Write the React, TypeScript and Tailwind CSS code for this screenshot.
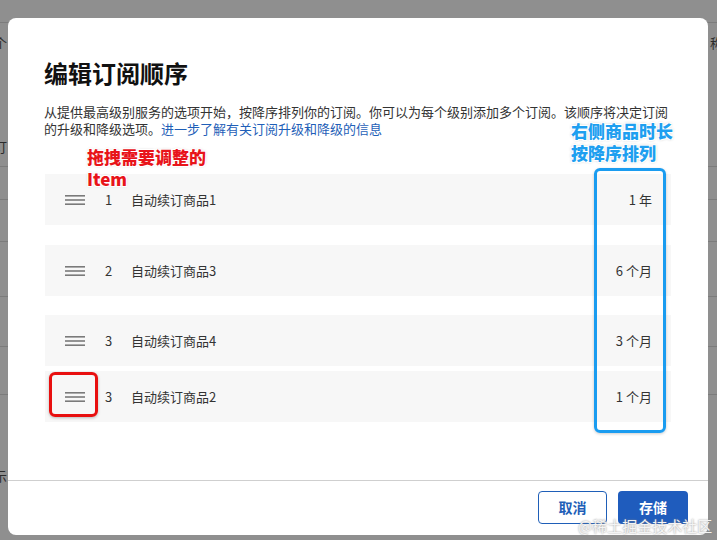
import React from 'react';

const FONT = { fontFamily: '"Noto Sans CJK SC", "Noto Sans", sans-serif' };

const ROWS = [
  { no: 1, name: '自动续订商品1', term: '1 年', mt: 'mt-[37px]' },
  { no: 2, name: '自动续订商品3', term: '6 个月', mt: 'mt-[20px]' },
  { no: 3, name: '自动续订商品4', term: '3 个月', mt: 'mt-[19px]' },
  { no: 3, name: '自动续订商品2', term: '1 个月', mt: 'mt-[5px]' },
];

const DragHandle = () => (
  <svg width="20" height="12" viewBox="0 0 20 12" className="shrink-0">
    <rect x="0" y="1" width="20" height="1.6" fill="#7a7a7a" />
    <rect x="0" y="5.2" width="20" height="1.6" fill="#7a7a7a" />
    <rect x="0" y="9.4" width="20" height="1.6" fill="#7a7a7a" />
  </svg>
);

// page behind the overlay
const Backdrop = () => (
  <div className="flex flex-col text-[13px] text-[#2b2b2b]">
    <div className="h-[23px] border-b border-[#7c7c7c]" />
    <div className="h-[144px] border-b border-[#7c7c7c] flex flex-col justify-between py-[10px]">
      <div className="flex justify-between -ml-[6px] -mr-[6px]">
        <span>个</span>
        <span>称</span>
      </div>
      <span className="-ml-[6px]">订</span>
    </div>
    <div className="h-[33px] border-b border-[#7c7c7c]" />
    <div className="h-[42px] border-b border-[#7c7c7c]" />
    <div className="h-[55px] border-b border-[#7c7c7c]" />
    <div className="h-[50px] border-b border-[#7c7c7c]" />
    <div className="h-[48px] border-b border-[#7c7c7c]" />
    <div className="h-[100px] flex items-end pb-[10px]">
      <span className="-ml-[6px]">示</span>
    </div>
  </div>
);

export default function App() {
  return (
    <div className="relative w-[717px] h-[540px] bg-[#8f8f8f] overflow-hidden" style={FONT}>
      <Backdrop />

      {/* modal */}
      <div className="absolute left-[8px] top-[18px] w-[700px] h-[517px] bg-white rounded-[8px] flex flex-col">
        <div className="flex-1 pl-[36px] pr-[40px]">
          <h1 className="mt-[39px] text-[24px] leading-[32px] font-bold text-[#111]">编辑订阅顺序</h1>
          <p className="mt-[14px] text-[13px] leading-[17px] text-[#333]">
            从提供最高级别服务的选项开始，按降序排列你的订阅。你可以为每个级别添加多个订阅。该顺序将决定订阅
            <br />
            的升级和降级选项。<span className="text-[#1f5fb8]">进一步了解有关订阅升级和降级的信息</span>
          </p>

          <div className="flex flex-col">
            {ROWS.map((r, i) => (
              <div
                key={i}
                className={`${r.mt} h-[51px] bg-[#f7f7f7] flex items-center text-[13px] text-[#333] pl-[20px] pr-[19px] -mr-[3px] ml-[1px]`}
              >
                <DragHandle />
                <span className="w-[27px] text-center ml-[10px]">{r.no}</span>
                <span className="ml-[9px]">{r.name}</span>
                <span className="ml-auto">{r.term}</span>
              </div>
            ))}
          </div>
        </div>

        <div className="h-[55px] border-t border-[#cfcfcf] flex items-start justify-end gap-[11px] pt-[10px] pr-[20px]">
          <button className="w-[69px] h-[33px] rounded-[4px] border border-[#1f5fb8] bg-white text-[#1f5fb8] text-[14px] font-bold">
            取消
          </button>
          <button className="w-[70px] h-[33px] rounded-[4px] bg-[#1f5cbd] text-white text-[14px] font-bold">
            存储
          </button>
        </div>
      </div>

      {/* annotations */}
      <div
        className="absolute left-[87px] top-[146px] text-[17px] leading-[22px] font-black text-[#e8141a]"
        style={{ textShadow: '1px 1px 0 #fff, -1px -1px 0 #fff, 1px -1px 0 #fff, -1px 1px 0 #fff, 0 0 3px #bbb' }}
      >
        拖拽需要调整的
        <br />
        Item
      </div>
      <div
        className="absolute left-[571px] top-[120px] text-[17px] leading-[22px] font-black text-[#1e9ff0]"
        style={{ textShadow: '1px 1px 0 #fff, -1px -1px 0 #fff, 1px -1px 0 #fff, -1px 1px 0 #fff, 0 0 3px #999' }}
      >
        右侧商品时长
        <br />
        按降序排列
      </div>
      <div className="absolute left-[49px] top-[372px] w-[49px] h-[45px] border-[3px] border-[#e80f0f] rounded-[6px] shadow-[0_1px_3px_rgba(0,0,0,0.25)]" />
      <div className="absolute left-[594px] top-[168px] w-[72px] h-[265px] border-[3px] border-[#1a9cf0] rounded-[6px] shadow-[0_1px_3px_rgba(0,0,0,0.2)]" />

      {/* watermark */}
      <div
        className="absolute left-[578px] top-[516px] text-[15px] leading-[20px] text-[#f4f4f4]"
        style={{ fontFamily: '"Noto Sans CJK SC", serif', textShadow: '0 0 2px #888' }}
      >
        @稀土掘金技术社区
      </div>
    </div>
  );
}
